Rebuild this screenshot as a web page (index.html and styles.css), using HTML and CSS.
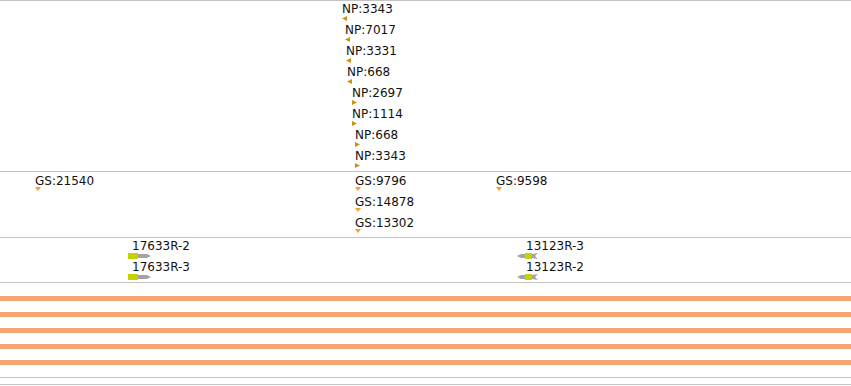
FILE: index.html
```html
<!DOCTYPE html>
<html lang="en">
<head>
  <meta charset="UTF-8">
  <meta name="viewport" content="width=device-width, initial-scale=1.0">
  <title>tracks</title>
  <link rel="stylesheet" href="styles.css">
</head>
<body>
  <div class="browser">
    <!-- NP track: left = reverse strand, right = forward strand -->
    <div class="track track-np">
      <div class="feat" style="left:342px;top:2px"><span class="label">NP:3343</span><svg class="mark np" width="5" height="5"><polygon points="0,2.5 5,0 5,5"/></svg></div>
      <div class="feat" style="left:345px;top:23px"><span class="label">NP:7017</span><svg class="mark np" width="5" height="5"><polygon points="0,2.5 5,0 5,5"/></svg></div>
      <div class="feat" style="left:346px;top:44px"><span class="label">NP:3331</span><svg class="mark np" width="5" height="5"><polygon points="0,2.5 5,0 5,5"/></svg></div>
      <div class="feat" style="left:347px;top:65px"><span class="label">NP:668</span><svg class="mark np" width="5" height="5"><polygon points="0,2.5 5,0 5,5"/></svg></div>
      <div class="feat" style="left:352px;top:86px"><span class="label">NP:2697</span><svg class="mark np" width="5" height="5"><polygon points="0,0 5,2.5 0,5"/></svg></div>
      <div class="feat" style="left:352px;top:107px"><span class="label">NP:1114</span><svg class="mark np" width="5" height="5"><polygon points="0,0 5,2.5 0,5"/></svg></div>
      <div class="feat" style="left:355px;top:128px"><span class="label">NP:668</span><svg class="mark np" width="5" height="5"><polygon points="0,0 5,2.5 0,5"/></svg></div>
      <div class="feat" style="left:355px;top:149px"><span class="label">NP:3343</span><svg class="mark np" width="5" height="5"><polygon points="0,0 5,2.5 0,5"/></svg></div>
    </div>

    <!-- GS track -->
    <div class="track track-gs">
      <div class="feat" style="left:35px;top:3px"><span class="label">GS:21540</span><svg class="mark gs" width="6" height="4"><polygon points="0,0 6,0 3,4"/></svg></div>
      <div class="feat" style="left:355px;top:3px"><span class="label">GS:9796</span><svg class="mark gs" width="6" height="4"><polygon points="0,0 6,0 3,4"/></svg></div>
      <div class="feat" style="left:355px;top:24px"><span class="label">GS:14878</span><svg class="mark gs" width="6" height="4"><polygon points="0,0 6,0 3,4"/></svg></div>
      <div class="feat" style="left:355px;top:45px"><span class="label">GS:13302</span><svg class="mark gs" width="6" height="4"><polygon points="0,0 6,0 3,4"/></svg></div>
      <div class="feat" style="left:496px;top:3px"><span class="label">GS:9598</span><svg class="mark gs" width="6" height="4"><polygon points="0,0 6,0 3,4"/></svg></div>
    </div>

    <!-- reagent track -->
    <div class="track track-gene">
      <div class="feat" style="left:128px;top:2px"><span class="label fwd">17633R-2</span><svg class="glyph" width="24" height="6"><rect class="core" x="0" y="0" width="10" height="6"/><polygon class="arm" points="10,1 19,1 23,3 19,5 10,5"/></svg></div>
      <div class="feat" style="left:128px;top:23px"><span class="label fwd">17633R-3</span><svg class="glyph" width="24" height="6"><rect class="core" x="0" y="0" width="10" height="6"/><polygon class="arm" points="10,1 19,1 23,3 19,5 10,5"/></svg></div>
      <div class="feat" style="left:517px;top:2px"><span class="label rev">13123R-3</span><svg class="glyph" width="22" height="6"><polygon class="arm" points="0,3 4,1 8,1 8,5 4,5"/><rect class="core" x="8" y="0" width="7" height="6"/><polygon class="arm" points="15,1 21,0 18,3 21,6 15,5"/></svg></div>
      <div class="feat" style="left:517px;top:23px"><span class="label rev">13123R-2</span><svg class="glyph" width="22" height="6"><polygon class="arm" points="0,3 4,1 8,1 8,5 4,5"/><rect class="core" x="8" y="0" width="7" height="6"/><polygon class="arm" points="15,1 21,0 18,3 21,6 15,5"/></svg></div>
    </div>

    <!-- coverage track -->
    <div class="track track-bars">
      <div class="bar"></div>
      <div class="bar"></div>
      <div class="bar"></div>
      <div class="bar"></div>
      <div class="bar"></div>
    </div>

    <div class="track track-empty"></div>
  </div>
</body>
</html>
```

FILE: styles.css
```css
body{
  margin: 0;
  background: white;
  font-family: "DejaVu Sans", Verdana, sans-serif;
  font-size: 12px;
  color: #111;
  overflow: hidden;
}
.browser{
  width: 851px;
  border-top: 1px solid #c4c4c4;
}
.track{
  position: relative; /* features sit on genome coordinates */
  border-bottom: 1px solid #c4c4c4;
}
.track-np{
  height: 170px;
}
.track-gs{
  height: 65px;
}
.track-gene{
  height: 44px;
}
.track-bars{
  height: 95px;
  box-sizing: border-box;
  padding-top: 13px;
  display: flex;
  flex-direction: column;
  gap: 11px;
}
.track-empty{
  height: 6px;
}
.feat{
  position: absolute;
  display: flex;
  flex-direction: column;
  align-items: flex-start;
}
.label{
  line-height: 12px;
  white-space: nowrap;
}
.mark{
  display: block;
}
.mark.np{
  margin-top: 1px;
  fill: #d18f0b;
}
.mark.gs{
  margin-top: 0;
  fill: #f0a22a;
}
.label.fwd{
  margin-left: 4px;
}
.label.rev{
  margin-left: 9px;
}
.glyph{
  display: block;
  margin-top: 1px;
}
.glyph .core{
  fill: #c6d200;
}
.glyph .arm{
  fill: #a3a3a3;
}
.bar{
  height: 5px;
  background: #f5a56f;
}
```
